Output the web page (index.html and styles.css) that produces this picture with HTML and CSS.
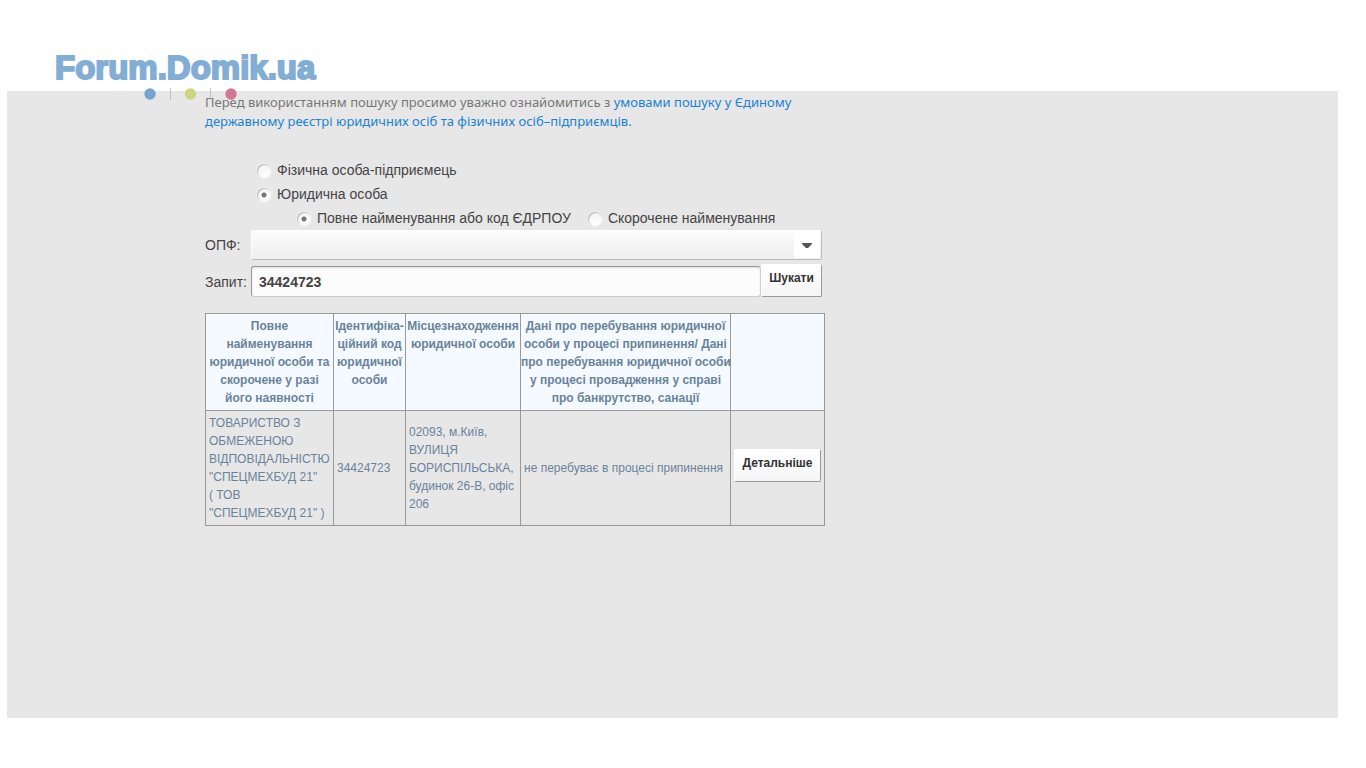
FILE: index.html
```html
<!DOCTYPE html>
<html lang="uk">
<head>
<meta charset="utf-8">
<title>Пошук у Єдиному державному реєстрі</title>
<link rel="stylesheet" href="styles.css">
</head>
<body>
<header class="brand">
  <a class="brand-name" href="#">Forum.Domik.ua</a>
  <svg class="brand-dots" width="96" height="14" viewBox="0 0 96 14" aria-hidden="true">
    <circle cx="6" cy="7" r="5.7" fill="#75a4cd"/>
    <path d="M26.5 1v12M66.5 1v12" stroke="#c3c0bd" stroke-width="1"/>
    <circle cx="46.5" cy="7" r="5.7" fill="#cdd583"/>
    <circle cx="87" cy="7" r="5.7" fill="#d37890"/>
  </svg>
</header>
<main class="panel">
  <div class="content">
    <p class="intro">Перед використанням пошуку просимо уважно ознайомитись з <a href="#">умовами пошуку у Єдиному<br>державному реєстрі юридичних осіб та фізичних осіб–підприємців.</a></p>
    <form class="search">
      <div class="options">
        <label class="option"><input type="radio" name="kind">Фізична особа-підприємець</label>
        <label class="option"><input type="radio" name="kind" checked>Юридична особа</label>
        <div class="suboptions">
          <label class="option"><input type="radio" name="by" checked>Повне найменування або код ЄДРПОУ</label>
          <label class="option"><input type="radio" name="by">Скорочене найменування</label>
        </div>
      </div>
      <div class="row">
        <label class="caption" for="opf">ОПФ:</label>
        <div class="picker">
          <select id="opf"><option></option></select>
          <span class="picker-arrow"><svg width="10" height="5" viewBox="0 0 10 5" aria-hidden="true"><path d="M0 0h10v1L6 5H4L0 1z" fill="#555"/></svg></span>
        </div>
      </div>
      <div class="row">
        <label class="caption" for="query">Запит:</label>
        <input class="query" id="query" type="text" value="34424723">
        <button class="button" type="button">Шукати</button>
      </div>
    </form>
    <table class="results">
      <colgroup><col class="col-name"><col class="col-code"><col class="col-place"><col class="col-state"><col class="col-more"></colgroup>
      <thead>
        <tr>
          <th>Повне<br>найменування<br>юридичної особи та<br>скорочене у разі<br>його наявності</th>
          <th>Ідентифіка-<br>ційний код<br>юридичної<br>особи</th>
          <th>Місцезнаходження<br>юридичної особи</th>
          <th>Дані про перебування юридичної<br>особи у процесі припинення/ Дані<br>про перебування юридичної особи<br>у процесі провадження у справі<br>про банкрутство, санації</th>
          <th></th>
        </tr>
      </thead>
      <tbody>
        <tr>
          <td>ТОВАРИСТВО З<br>ОБМЕЖЕНОЮ<br>ВІДПОВІДАЛЬНІСТЮ<br>"СПЕЦМЕХБУД 21"<br>( ТОВ<br>"СПЕЦМЕХБУД 21" )</td>
          <td>34424723</td>
          <td>02093, м.Київ,<br>ВУЛИЦЯ<br>БОРИСПІЛЬСЬКА,<br>будинок 26-В, офіс<br>206</td>
          <td>не перебуває в процесі припинення</td>
          <td class="more"><button class="button" type="button">Детальніше</button></td>
        </tr>
      </tbody>
    </table>
  </div>
</main>
</body>
</html>
```
FILE: styles.css
```css
* { box-sizing: border-box; }

body {
  margin: 0;
  padding: 91px 28px 50px 7px;
  background: #fff;
  color: #444;
  font-family: "Liberation Sans", Arial, sans-serif;
  font-size: 14px;
}

/* The brand hangs over the top edge of the panel. */
.brand {
  position: absolute;
  top: 49px;
  left: 55px;
}

.brand-name {
  display: block;
  color: #82aed6;
  font-family: "Liberation Sans", Arial, sans-serif;
  font-size: 33px;
  font-weight: bold;
  line-height: 38px;
  text-decoration: none;
  -webkit-text-stroke: 2px #82aed6;
}

.brand-dots {
  display: block;
  margin-left: 89px;
}

.panel {
  min-height: calc(100vh - 141px);
  padding: 2px 20px 20px 198px;
  background: #e7e7e7;
}

.content { max-width: 620px; }

.intro {
  margin: 0 0 27px;
  color: #777;
  font-family: "Noto Sans", sans-serif;
  font-size: 13px;
  line-height: 19px;
  white-space: nowrap;
}

.intro a { color: #1a82d2; text-decoration: none; }

.options { padding-left: 52px; }

.option {
  display: flex;
  align-items: center;
  gap: 6px;
  height: 24px;
}

.suboptions {
  display: flex;
  gap: 17px;
  padding-left: 40px;
}

.option input {
  appearance: none;
  width: 14px;
  height: 14px;
  margin: 2px 0 0;
  border-radius: 50%;
  background: linear-gradient(#f2f2f2, #fff);
  box-shadow: inset 1px 1px 1px #bbb, 0 0 1px 1px #eee;
}

.option input:checked {
  background: radial-gradient(circle, #777 0 2px, #f8f8f8 3px);
}

.row {
  display: flex;
  margin-right: 3px;
}

.caption {
  flex: 0 0 46px;
  line-height: 30px;
}

.picker {
  display: grid;
  flex: 1;
  height: 30px;
  margin-bottom: 4px;
}

.picker select,
.picker-arrow { grid-area: 1 / 1; }

.picker select {
  appearance: none;
  width: 100%;
  border: 1px solid #fff;
  border-right-color: #bbb;
  border-bottom-color: #bbb;
  border-radius: 2px;
  background: linear-gradient(#fcfcfc, #f0eeef);
}

.picker-arrow {
  display: flex;
  align-items: center;
  justify-content: center;
  justify-self: end;
  width: 26px;
  margin: 2px;
  border-radius: 2px;
  background: #fff;
  pointer-events: none;
}

.row .query {
  flex: 1;
  min-width: 0;
  height: 31px;
  margin-top: 2px;
  padding: 0 7px;
  border: 1px solid #ccc;
  border-top-color: #999;
  border-left-color: #999;
  border-radius: 3px;
  background: #fcfcfc;
  box-shadow: inset 0 1px 2px #ddd;
  color: #444;
  font: bold 14px "Liberation Sans", Arial, sans-serif;
}

.row .query + .button { flex: 0 0 61px; }
.row:last-child .caption { line-height: 36px; height: 33px; }

.button {
  height: 33px;
  padding: 0 7px 6px;
  border: 1px solid #fff;
  border-right-color: #999;
  border-bottom-color: #999;
  border-radius: 2px;
  background: linear-gradient(#fff, #f5f5f5);
  color: #333;
  font: bold 12px "Liberation Sans", Arial, sans-serif;
}

.results {
  width: 100%;
  margin-top: 16px;
  border-collapse: collapse;
  table-layout: fixed;
  color: #6a839c;
  font-size: 12px;
  line-height: 18px;
}

.col-name { width: 128px; }
.col-code { width: 72px; }
.col-place { width: 115px; }
.col-state { width: 210px; }

.results th,
.results td {
  border: 1px solid #999;
  padding: 3px;
  text-align: left;
  white-space: nowrap;
}

.results th {
  padding: 3px 0;
  background: #f4faff;
  text-align: center;
  vertical-align: top;
}

.results .more { padding: 0 0 5px; }

.more .button {
  display: block;
  margin: 0 auto;
}
```
